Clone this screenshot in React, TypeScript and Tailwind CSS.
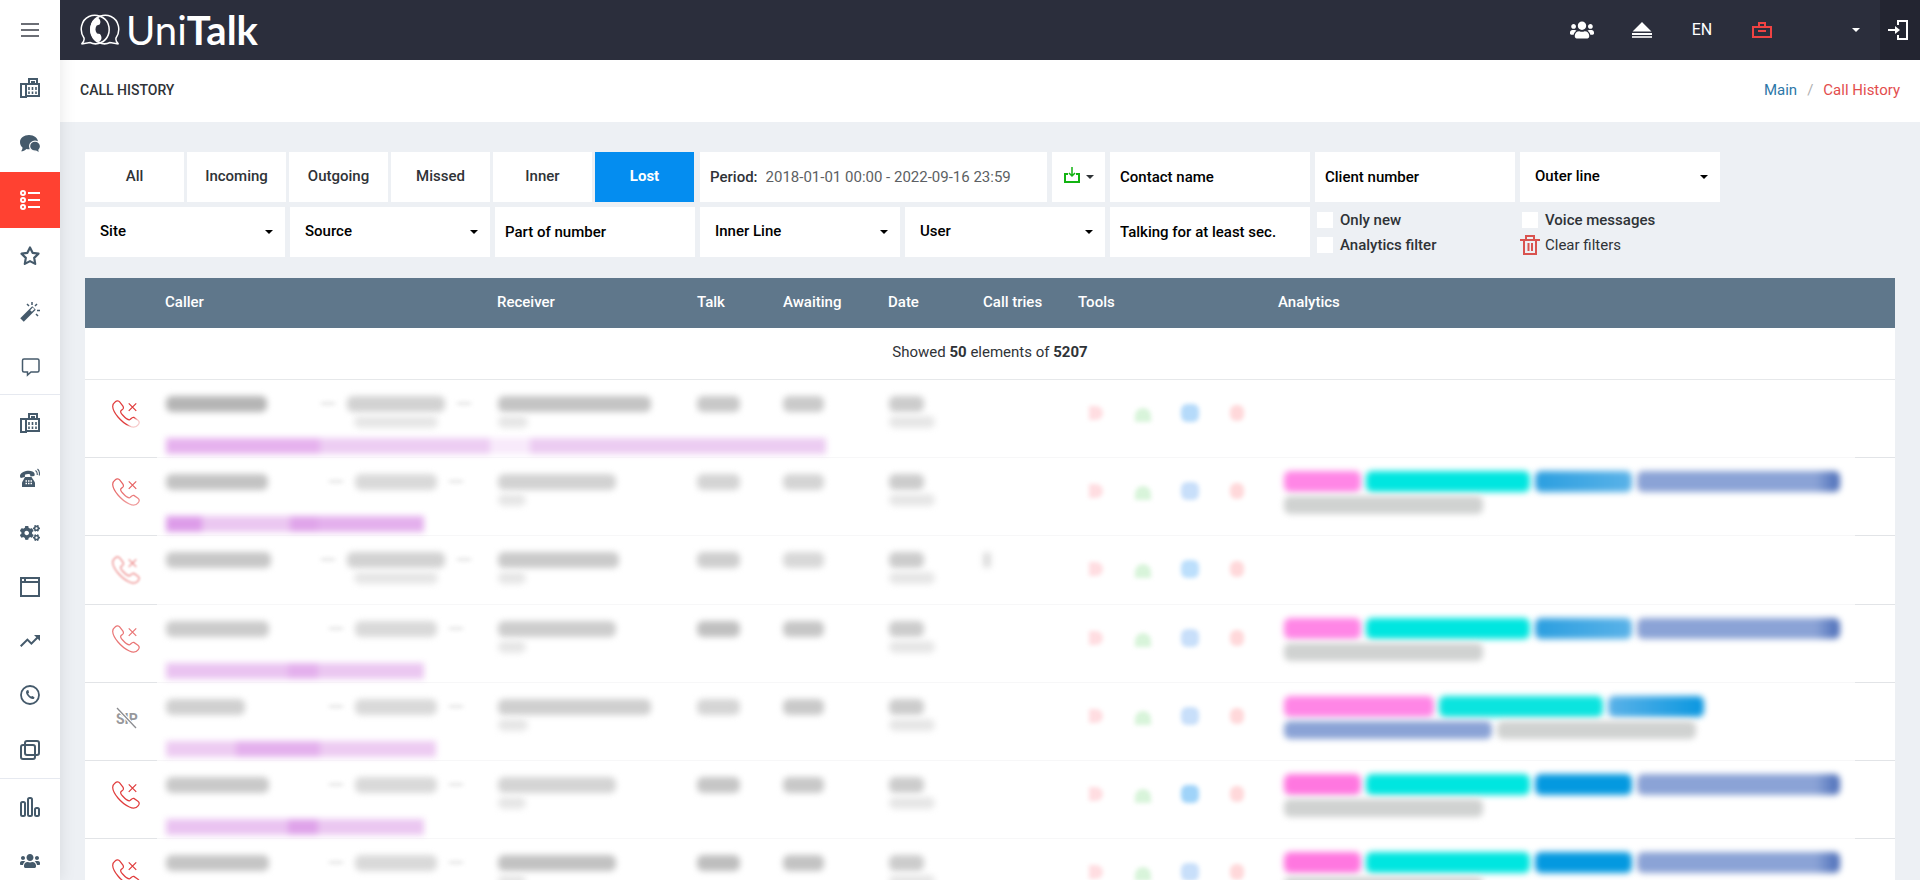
import type { ReactNode } from "react";
import clsx from "clsx";
import { FaCogs, FaUsers } from "react-icons/fa";
import { MdTrendingUp } from "react-icons/md";

function FaxIcon() {
  return (
    <svg width="20" height="20" viewBox="0 0 20 20" fill="none" stroke="currentColor" strokeWidth="2">
      <path d="M1 6h5v13H1zM6 18h13V6H6M9 6V1h8v5" />
      <path d="M11 4h4" />
      <path d="M9 9v3M12.500 9v3M16 9v3M9 13.500v2.500M12.500 13.500v2.500M16 13.500v2.500" strokeWidth="1.600" />
    </svg>
  );
}

function ChatsIcon() {
  return (
    <svg width="20" height="18" viewBox="0 0 20 18" fill="currentColor">
      <path d="M9 0c5 0 9 3 9 7s-4 7.200-9 7.200c-1 0-1.800-.1-2.600-.3C5 15.300 3 16.300 1 16.300c1-1 1.500-2.300 1.500-3.700C1 11.300 0 9.300 0 7c0-4 4-7 9-7z" />
      <path
        d="M15 6.200c3.200 0 5.500 2.300 5.500 5 0 1.600-.6 2.800-1.600 3.700 0 1 .5 1.900 1.100 2.600-1.500 0-2.800-.5-3.900-1.400-3.700.3-6.500-1.900-6.500-4.900 0-2.700 2.300-5 5.400-5z"
        stroke="#fff"
        strokeWidth="1.200"
      />
    </svg>
  );
}

function ListIcon() {
  return (
    <svg width="20" height="20" viewBox="0 0 20 20" fill="none" stroke="currentColor" strokeWidth="2">
      <circle cx="3" cy="3" r="2" />
      <circle cx="3" cy="10" r="2" />
      <circle cx="3" cy="17" r="2" />
      <path d="M8 3h12M8 10h12M8 17h12" />
    </svg>
  );
}

function StarIcon() {
  return (
    <svg width="20" height="20" viewBox="0 0 20 20" fill="none" stroke="currentColor" strokeWidth="2.200" strokeLinejoin="round">
      <path d="M10 1.500l2.600 5.300 5.900.9-4.300 4.200 1 6-5.200-2.800L4.800 17.900l1-6L1.500 7.700l5.900-.9z" />
    </svg>
  );
}

function WandIcon() {
  return (
    <svg width="20" height="20" viewBox="0 0 20 20" fill="none" stroke="currentColor">
      <path d="M2 18L14 6" strokeWidth="5" />
      <path d="M11 9l2.600-2.600" stroke="#fff" strokeWidth="2.400" />
      <path d="M12 0v3M7 2l2 2M17 2l-2 2M17 8.500h3M16 12l2 2" strokeWidth="1.500" />
    </svg>
  );
}

function MessageIcon() {
  return (
    <svg width="20" height="20" viewBox="0 0 20 20" fill="none" stroke="currentColor" strokeWidth="1.5">
      <path d="M4 2h13.500a1.500 1.500 0 0 1 1.500 1.500v10a1.500 1.500 0 0 1-1.500 1.500H11l-3.500 3V15H4a1.500 1.500 0 0 1-1.500-1.500v-10A1.500 1.500 0 0 1 4 2z" />
    </svg>
  );
}

function DeskPhoneIcon() {
  return (
    <svg width="20" height="20" viewBox="0 0 20 20">
      <path
        d="M0 7.500C1 2.500 13 1 14.500 5.500c.3 1 .2 2-.3 2.400L10.500 8.500C10 8 10.500 6.600 9.800 6.300 8.500 5.800 6.500 6 5.300 6.600c-.8.500 0 1.900-.6 2.300L1 10C.2 9.800-.1 8.500 0 7.500z"
        fill="currentColor"
      />
      <path d="M5 9h6.500l3.500 5.500V19H2v-4.500z" fill="currentColor" />
      <path d="M5.500 13h1.500M8 13h1.500M10.500 13h1.500M5.500 15.500h1.500M8 15.500h1.500M10.500 15.500h1.500" stroke="#fff" strokeWidth="1.300" />
      <path d="M15.500 2.500c1.500 1 2 2.500 1.700 4.500M17.500 1c1.800 1.500 2.300 4 1.700 6.500" fill="none" stroke="currentColor" strokeWidth="1.100" />
    </svg>
  );
}

function WindowIcon() {
  return (
    <svg width="20" height="20" viewBox="0 0 20 20" fill="none" stroke="currentColor" strokeWidth="2">
      <path d="M1 1h18v18H1zM1 5h18M5 1v4" />
    </svg>
  );
}

function CallCircleIcon() {
  return (
    <svg width="20" height="20" viewBox="0 0 20 20" fill="none">
      <circle cx="10" cy="10" r="9" stroke="currentColor" strokeWidth="1.800" />
      <path d="M7 5.300c-1.500 1-1.300 3.400.8 5.800 2 2.300 4.600 3.600 6.200 2.600l.6-1.200-2-1.600-1.500.7c-1.400-.6-2.300-1.600-2.900-3l.9-1.100L8.300 5z" fill="currentColor" />
    </svg>
  );
}

function LayersIcon() {
  return (
    <svg width="20" height="20" viewBox="0 0 20 20" fill="none" stroke="currentColor" strokeWidth="2">
      <rect x="1" y="5" width="14" height="14" rx="2" />
      <rect x="5" y="1" width="14" height="14" rx="2" />
    </svg>
  );
}

function ChartIcon() {
  return (
    <svg width="20" height="20" viewBox="0 0 20 20" fill="none" stroke="currentColor" strokeWidth="2">
      <rect x="1" y="5" width="4" height="14" rx="1.500" />
      <rect x="8" y="1" width="4" height="18" rx="1.500" />
      <rect x="15" y="11" width="4" height="8" rx="1.500" />
    </svg>
  );
}

function Caret({ className }: { className?: string }) {
  return (
    <svg width="8" height="4" viewBox="0 0 8 4" className={clsx("pointer-events-none", className)}>
      <path d="M0 0h8L4 4z" fill="currentColor" />
    </svg>
  );
}

function LostCallIcon({ className }: { className?: string }) {
  return (
    <svg
      width="28"
      height="28"
      viewBox="-1 -1 82 82"
      fill="none"
      stroke="currentColor"
      strokeWidth="3.600"
      className={clsx("text-[#e03c3c]", className)}
    >
      <path d="M8 5C13 0 19 1 22 5l9 12c3 5 1 9-3 11-6 3-4 9 2 15 8 9 15 14 20 14 4-1 7-9 13-7l12 8c5 4 4 9 1 13-6 8-16 9-26 4C25 64 2 35 1 18 1 12 4 8 8 5z" />
      <path d="M48 9l22 22M70 9L48 31" />
    </svg>
  );
}

function SipOffIcon() {
  return (
    <svg width="24" height="24" viewBox="0 0 24 24" className="mt-1 ml-[3px]">
      <text x="1" y="17" fontSize="14" fontWeight="700" fontFamily="Roboto, sans-serif" fill="#97989b">
        SIP
      </text>
      <path d="M2 1l19 20" stroke="#fff" strokeWidth="3.500" />
      <path d="M2 1l19 20" stroke="#8b8c90" strokeWidth="1.300" />
    </svg>
  );
}

function Logo() {
  return (
    <a href="#" aria-label="UniTalk" className="flex items-center gap-1.5 text-white">
      <svg width="40" height="32" viewBox="0 0 40 32" fill="none" stroke="currentColor" strokeWidth="1.500">
        <path d="M4 24C-1 17 1 6 9 2.500c7-3 16 0 19 7 3 8 0 16-7 19-4 2-8 1.500-11 0L1.500 30C4 28 4.500 26.500 4 24z" />
        <path d="M36 24c5-7 3-18-5-21.500-7-3-16 0-19 7-3 8 0 16 7 19 4 2 8 1.500 11 0l8.500 1.500C36 28 35.500 26.500 36 24z" />
        <path
          d="M18 3.500c-10 3-11 20 1 24.500l2-2c1-2 .5-4-1-6l-3-.5c-2-2.500-2-5.500-.3-8l3-1c1.300-2 1-5-1.700-7z"
          fill="currentColor"
          stroke="none"
        />
      </svg>
      <span className="font-[Lato] text-[40px] leading-[60px] font-normal">
        Uni<b className="font-bold">Talk</b>
      </span>
    </a>
  );
}

type NavItem = { label: string; icon: ReactNode; className: string };

const navItems: NavItem[] = [
  { label: "Dashboard", icon: <FaxIcon />, className: "h-14" },
  { label: "Chats", icon: <ChatsIcon />, className: "h-14" },
  { label: "Call history", icon: <ListIcon />, className: "h-14 bg-[#ff4131] text-white" },
  { label: "Favourites", icon: <StarIcon />, className: "h-14" },
  { label: "Automation", icon: <WandIcon />, className: "h-14" },
  { label: "Messages", icon: <MessageIcon />, className: "h-[54px]" },
  { label: "Company", icon: <FaxIcon />, className: "h-14 border-t border-[#e6e9f0]" },
  { label: "Phones", icon: <DeskPhoneIcon />, className: "h-14" },
  { label: "Settings", icon: <FaCogs size={20} />, className: "h-[54px]" },
  { label: "Widgets", icon: <WindowIcon />, className: "h-[54px]" },
  { label: "Trends", icon: <MdTrendingUp size={24} />, className: "h-[54px]" },
  { label: "Callback", icon: <CallCircleIcon />, className: "h-[54px]" },
  { label: "Templates", icon: <LayersIcon />, className: "h-14" },
  { label: "Statistics", icon: <ChartIcon />, className: "h-14 border-t border-[#e6e9f0]" },
  { label: "Users", icon: <FaUsers size={20} />, className: "h-[54px]" },
];

function Sidebar() {
  return (
    <aside className="z-10 flex w-[60px] shrink-0 flex-col overflow-hidden bg-white text-[#455a6b] shadow-[0_0_16px_rgba(0,0,0,0.1)]">
      <button type="button" aria-label="Menu" className="flex h-[60px] shrink-0 items-center justify-center text-[#6b6e75]">
        <svg width="18" height="14" viewBox="0 0 18 14" stroke="currentColor" strokeWidth="2">
          <path d="M0 1h18M0 7h18M0 13h18" />
        </svg>
      </button>
      <nav>
        {navItems.map((item) => (
          <a key={item.label} href="#" aria-label={item.label} className={clsx("flex items-center justify-center", item.className)}>
            {item.icon}
          </a>
        ))}
      </nav>
    </aside>
  );
}

function Header() {
  return (
    <header className="z-20 flex h-[60px] shrink-0 items-center justify-between bg-[#2b2e3c] pl-5 text-white">
      <Logo />
      <div className="flex h-full items-center">
        <button type="button" aria-label="Users" className="flex w-[60px] justify-center">
          <FaUsers size={24} />
        </button>
        <button type="button" aria-label="Eject" className="flex w-[60px] justify-center">
          <svg width="20" height="16" viewBox="0 0 20 16" fill="currentColor">
            <path d="M10 0l9.500 9.500H.5zM0 11h20v2H0z" />
            <path d="M0 14h20v2H0z" opacity="0.8" />
          </svg>
        </button>
        <button type="button" className="w-[60px] text-base">
          EN
        </button>
        <button type="button" aria-label="Toolbox" className="flex w-[60px] justify-center text-[#f04343]">
          <svg width="20" height="16" viewBox="0 0 20 16" fill="none" stroke="currentColor" strokeWidth="2">
            <path d="M1 5h18v10H1zM7 5V1h6v4M6 9h8" />
          </svg>
        </button>
        <button type="button" aria-label="Account" className="flex h-full w-[88px] items-center justify-end pr-5">
          <Caret />
        </button>
        <button type="button" aria-label="Log out" className="flex h-full w-10 items-center justify-center bg-[#232531] pr-1">
          <svg width="20" height="20" viewBox="0 0 20 20" fill="none" stroke="currentColor" strokeWidth="2">
            <path d="M10 5V1h9v18h-9v-4M0 10h9" />
            <path d="M7 6l5 4-5 4z" fill="currentColor" stroke="none" />
          </svg>
        </button>
      </div>
    </header>
  );
}

function FilterSelect({ label }: { label: string }) {
  return (
    <div className="relative">
      <select aria-label={label} className="h-[50px] w-full appearance-none bg-white pr-8 pb-0.5 pl-[15px] font-medium text-black">
        <option>{label}</option>
      </select>
      <Caret className="absolute top-[23px] right-3 text-black" />
    </div>
  );
}

function FilterInput({ label }: { label: string }) {
  return (
    <input
      type="text"
      aria-label={label}
      placeholder={label}
      className="h-[50px] w-full bg-white px-2.5 font-medium text-black placeholder:text-black"
    />
  );
}

function FilterCheckbox({ label }: { label: string }) {
  return (
    <label className="flex h-[25px] items-center gap-[7px] pl-0.5 font-medium">
      <input type="checkbox" className="size-4 appearance-none bg-white" />
      {label}
    </label>
  );
}

const callTypes = ["All", "Incoming", "Outgoing", "Missed", "Inner", "Lost"];

function Filters() {
  return (
    <form className="grid w-full max-w-[1635px] grid-cols-8 gap-[5px]">
      <div className="col-span-3 grid grid-cols-6 gap-[3px] pr-px">
        {callTypes.map((type) => (
          <button
            key={type}
            type="button"
            className={clsx("h-[50px] pb-0.5", type === "Lost" ? "bg-[#048df0] font-bold text-white" : "bg-white font-medium")}
          >
            {type}
          </button>
        ))}
      </div>
      <div className="col-span-2 flex gap-[5px]">
        <div className="flex flex-1 items-center gap-2 bg-white px-2.5">
          <label htmlFor="period" className="font-medium">
            Period:
          </label>
          <input id="period" className="min-w-0 flex-1 text-[#5c5f63]" defaultValue="2018-01-01 00:00 - 2022-09-16 23:59" />
        </div>
        <button type="button" aria-label="Export" className="flex h-[50px] w-[53px] items-center justify-center gap-1.5 bg-white">
          <svg width="16" height="16" viewBox="0 0 16 16" fill="none" stroke="#12b312" className="mb-1">
            <path d="M4 7H1v8h14V7h-3" strokeWidth="2" />
            <path d="M8 0v9M5 6l3 3 3-3" strokeWidth="1.500" />
          </svg>
          <Caret />
        </button>
      </div>
      <FilterInput label="Contact name" />
      <FilterInput label="Client number" />
      <FilterSelect label="Outer line" />

      <FilterSelect label="Site" />
      <FilterSelect label="Source" />
      <FilterInput label="Part of number" />
      <FilterSelect label="Inner Line" />
      <FilterSelect label="User" />
      <FilterInput label="Talking for at least sec." />
      <div>
        <FilterCheckbox label="Only new" />
        <FilterCheckbox label="Analytics filter" />
      </div>
      <div>
        <FilterCheckbox label="Voice messages" />
        <button type="button" className="flex h-[25px] items-center gap-[5px]">
          <svg width="20" height="20" viewBox="0 0 20 20" fill="none" stroke="#d9534f" strokeWidth="2">
            <path d="M0 5h20M4 5v14h12V5M6 5V1h8v4M8.500 8v8M12 8v8" />
          </svg>
          Clear filters
        </button>
      </div>
    </form>
  );
}

type Call = {
  icon: ReactNode;
  caller: string;
  line: string;
  lineNote?: boolean;
  receiver: string;
  receiverNote: string;
  talk: string;
  awaiting: string;
  note?: string[];
  tries?: boolean;
  blueTool: string;
  tags: string[];
};

const wideLine = "w-[98px] bg-[#d2d2d2]";
const narrowLine = "w-[82px] bg-[#d9d9d9]";

const grayTag = "h-[18px] w-[199px] bg-[#d0d2d1]";
const indigoTag = "h-[21px] w-[203px] bg-[linear-gradient(90deg,#8ba3d6_88%,#4a6cb8)]";
const softTags = [
  "h-[21px] w-[77px] bg-[#ff86e6]",
  "h-[21px] w-[164px] bg-[#00e6e0]",
  "h-[21px] w-[97px] bg-[linear-gradient(90deg,#2b9fe0,#5ab2e8)]",
  indigoTag,
  grayTag,
];
const brightTags = [
  "h-[21px] w-[77px] bg-[#ff77e0]",
  "h-[21px] w-[164px] bg-[#00e6e0]",
  "h-[21px] w-[97px] bg-[#0499e0]",
  indigoTag,
  grayTag,
];

const calls: Call[] = [
  {
    icon: <LostCallIcon className="[mask-image:linear-gradient(135deg,#000_70%,#0004_82%)]" />,
    caller: "w-[101px] bg-[#b5b5b5]",
    line: wideLine,
    lineNote: true,
    receiver: "w-[153px] bg-[#c4c4c4]",
    receiverNote: "w-[30px]",
    talk: "bg-[#c8c8c8]",
    awaiting: "bg-[#cacaca]",
    note: ["w-[154px] bg-[#e6b2ee]", "w-[170px] bg-[#edcdf3]", "w-10 bg-[#f8eafb]", "w-[296px] bg-[#ecccf2]"],
    blueTool: "bg-[#b5dafa]",
    tags: [],
  },
  {
    icon: <LostCallIcon className="opacity-80 [mask-image:linear-gradient(180deg,#000_40%,#0009)]" />,
    caller: "w-[102px] bg-[#c3c3c3]",
    line: narrowLine,
    receiver: "w-[118px] bg-[#d2d2d2]",
    receiverNote: "w-7",
    talk: "bg-[#d4d4d4]",
    awaiting: "bg-[#d4d4d4]",
    note: ["w-9 bg-[#dd9ce9]", "w-[88px] bg-[#ebc7f1]", "w-7 bg-[#e0a5ea]", "w-[106px] bg-[#e4b0ed]"],
    blueTool: "bg-[#c8dffa]",
    tags: softTags,
  },
  {
    icon: <LostCallIcon className="opacity-60 blur-[1px]" />,
    caller: "w-[105px] bg-[#c7c7c7]",
    line: wideLine,
    lineNote: true,
    receiver: "w-[121px] bg-[#cacaca]",
    receiverNote: "w-7",
    talk: "bg-[#cecece]",
    awaiting: "bg-[#d8d8d8]",
    tries: true,
    blueTool: "bg-[#bcdffc]",
    tags: [],
  },
  {
    icon: <LostCallIcon className="opacity-70 blur-[0.5px]" />,
    caller: "w-[103px] bg-[#cbcbcb]",
    line: narrowLine,
    receiver: "w-[118px] bg-[#cdcdcd]",
    receiverNote: "w-7",
    talk: "bg-[#c0c0c0]",
    awaiting: "bg-[#c6c6c6]",
    note: ["w-[122px] bg-[#eac3f1]", "w-[30px] bg-[#e4b0ed]", "w-[106px] bg-[#ebc7f1]"],
    blueTool: "bg-[#c8dffa]",
    tags: softTags,
  },
  {
    icon: <SipOffIcon />,
    caller: "w-[79px] bg-[#d0d0d0]",
    line: narrowLine,
    receiver: "w-[153px] bg-[#cfcfcf]",
    receiverNote: "w-[30px]",
    talk: "bg-[#d5d5d5]",
    awaiting: "bg-[#c9c9c9]",
    note: ["w-[70px] bg-[#edcbf2]", "w-[84px] bg-[#e4b0ed]", "w-[116px] bg-[#edcbf2]"],
    blueTool: "bg-[#c8dffa]",
    tags: [
      "h-[21px] w-[150px] bg-[#ff86e6]",
      "h-[21px] w-[164px] bg-[#0be4df]",
      "h-[21px] w-[96px] bg-[linear-gradient(90deg,#5ab2e8,#0a97e0)]",
      "h-[18px] w-[208px] bg-[#8ba3d6]",
      grayTag,
    ],
  },
  {
    icon: <LostCallIcon />,
    caller: "w-[103px] bg-[#c9c9c9]",
    line: narrowLine,
    receiver: "w-[118px] bg-[#d4d4d4]",
    receiverNote: "w-7",
    talk: "bg-[#c6c6c6]",
    awaiting: "bg-[#c8c8c8]",
    note: ["w-[122px] bg-[#eac3f1]", "w-[30px] bg-[#dfa3ea]", "w-[106px] bg-[#ebc7f1]"],
    blueTool: "bg-[#9fd3f9]",
    tags: brightTags,
  },
  {
    icon: <LostCallIcon />,
    caller: "w-[103px] bg-[#c5c5c5]",
    line: narrowLine,
    receiver: "w-[118px] bg-[#c2c2c2]",
    receiverNote: "w-7",
    talk: "bg-[#bebebe]",
    awaiting: "bg-[#c3c3c3]",
    note: ["w-[122px] bg-[#eac3f1]", "w-[30px] bg-[#dfa3ea]", "w-[106px] bg-[#ebc7f1]"],
    blueTool: "bg-[#c8dffa]",
    tags: brightTags,
  },
];

function Smudge({ className }: { className: string }) {
  return <div className={clsx("h-4 rounded-md blur-[3px]", className)} />;
}

function SmallSmudge({ className }: { className?: string }) {
  return <div className={clsx("mt-1 h-3 rounded-md bg-[#e6e6e6] blur-[3px]", className)} />;
}

function CallRow({ call }: { call: Call }) {
  return (
    <tr className={clsx("align-top *:border-b *:border-[#f7f7f8]", call.note ? "h-[78px]" : "h-[69px]")}>
      <td className="border-[#e2e4e7]! pt-5 pl-[27px]">{call.icon}</td>
      <td className="pt-4 pl-[9px]">
        <div className="flex h-8">
          <div className="w-[136px] shrink-0">
            <Smudge className={call.caller} />
          </div>
          <div className="flex flex-1 justify-center gap-3">
            <div className="mt-1.5 h-[3px] w-3.5 bg-[#e4e4e4] blur-[2px]" />
            <div className="flex flex-col items-center">
              <Smudge className={call.line} />
              {call.lineNote && <SmallSmudge className="w-[84px]" />}
            </div>
            <div className="mt-1.5 h-[3px] w-3.5 bg-[#e4e4e4] blur-[2px]" />
          </div>
        </div>
        {call.note && (
          <div className="mt-2.5 flex w-max blur-[3px]">
            {call.note.map((part) => (
              <div key={part} className={clsx("h-4", part)} />
            ))}
          </div>
        )}
      </td>
      <td className="pt-4 pl-[9px]">
        <Smudge className={call.receiver} />
        <SmallSmudge className={call.receiverNote} />
      </td>
      <td className="pt-4 pl-2">
        <Smudge className={clsx("w-[43px]", call.talk)} />
      </td>
      <td className="pt-4 pl-2">
        <Smudge className={clsx("w-[41px]", call.awaiting)} />
      </td>
      <td className="pt-4 pl-[9px]">
        <Smudge className="w-[35px] bg-[#cccccc]" />
        <SmallSmudge className="w-[46px]" />
      </td>
      <td className="pt-4 pl-2">{call.tries && <Smudge className="w-2 bg-[#dcdcdc]" />}</td>
      <td className="pt-[25px] pl-[9px]">
        <div className="flex gap-[13px] *:flex *:h-4 *:w-[34px] *:items-center *:justify-center">
          <button type="button" aria-label="Play">
            <span className="h-3.5 w-3.5 rounded-r-full bg-[#ffdde1] blur-[2px]" />
          </button>
          <button type="button" aria-label="Download">
            <span className="mt-1 h-3.5 w-4 rounded-t-full bg-[#d8f4da] blur-[2px]" />
          </button>
          <button type="button" aria-label="Comment">
            <span className={clsx("h-[18px] w-[18px] rounded-md blur-[2px]", call.blueTool)} />
          </button>
          <button type="button" aria-label="Delete">
            <span className="h-4 w-3.5 rounded-md bg-[#ffd8da] blur-[2px]" />
          </button>
        </div>
      </td>
      <td className="pt-[13px] pl-3.5">
        <div className="flex flex-wrap gap-x-[5px] gap-y-1">
          {call.tags.map((tag) => (
            <div key={tag} className={clsx("rounded-md blur-[3px]", tag)} />
          ))}
        </div>
      </td>
      <td className="border-[#e2e4e7]!" />
    </tr>
  );
}

function CallTable() {
  return (
    <table className="w-full table-fixed bg-white text-left">
      <colgroup>
        <col className="w-[72px]" />
        <col className="w-[332px]" />
        <col className="w-[200px]" />
        <col className="w-[86px]" />
        <col className="w-[105px]" />
        <col className="w-[95px]" />
        <col className="w-[95px]" />
        <col className="w-[200px]" />
        <col />
        <col className="w-10" />
      </colgroup>
      <thead>
        <tr className="h-[50px] bg-[#5f778b] text-white *:pb-0.5 *:pl-2 *:font-medium">
          <th />
          <th>Caller</th>
          <th>Receiver</th>
          <th>Talk</th>
          <th>Awaiting</th>
          <th>Date</th>
          <th>Call tries</th>
          <th>Tools</th>
          <th>Analytics</th>
          <th />
        </tr>
      </thead>
      <tbody>
        <tr className="h-[51px] border-b border-[#e6e8ea]">
          <td colSpan={10} className="pb-0.5 text-center">
            Showed <b className="font-bold">50</b> elements of <b className="font-bold">5207</b>
          </td>
        </tr>
        {calls.map((call, i) => (
          <CallRow key={i} call={call} />
        ))}
      </tbody>
    </table>
  );
}

export default function App() {
  return (
    <div className="flex h-screen overflow-hidden bg-[#edf0f4] font-[Roboto,sans-serif] text-[15px] leading-5 text-[#2f3337]">
      <Sidebar />
      <div className="flex min-w-0 flex-1 flex-col">
        <Header />
        <div className="flex h-[62px] shrink-0 items-center justify-between bg-white px-5 pb-0.5">
          <h1 className="text-sm font-medium">CALL HISTORY</h1>
          <nav className="flex gap-2.5">
            <a href="#" className="text-[#2c77a8]">
              Main
            </a>
            <span className="text-[#b0b0b0]">/</span>
            <a href="#" className="text-[#e34d4d]">
              Call History
            </a>
          </nav>
        </div>
        <main className="min-h-0 flex-1 overflow-hidden px-[25px] pt-[30px]">
          <Filters />
          <div className="mt-[21px]">
            <CallTable />
          </div>
        </main>
      </div>
    </div>
  );
}
